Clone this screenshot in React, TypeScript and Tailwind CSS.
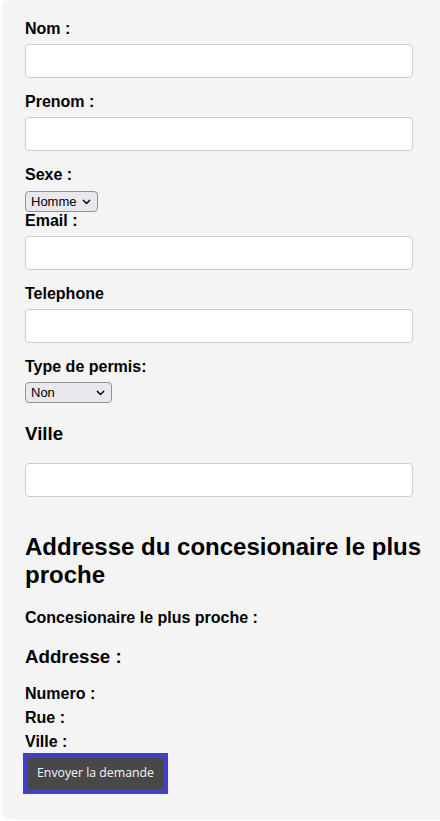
import { useState } from 'react'

function Chevron() {
  return (
    <svg
      className="w-[9px] h-[9px] absolute right-[7px] top-1/2 -translate-y-1/2 pointer-events-none"
      viewBox="0 0 10 10"
      fill="none"
    >
      <path d="M1.5 3.2L5 6.7l3.5-3.5" stroke="#111" strokeWidth="1.6" strokeLinecap="round" strokeLinejoin="round" />
    </svg>
  )
}

function Select({ value, options, width, onChange }: { value: string; options: string[]; width: string; onChange: (v: string) => void }) {
  return (
    <div className={`relative ${width}`}>
      <select
        value={value}
        onChange={(e) => onChange(e.target.value)}
        className="appearance-none block w-full h-[21px] pl-[5px] pr-5 text-[13px] leading-[19px] bg-[#e9e9ed] border border-[#8f8f9d] rounded-[4px] text-black"
        style={{ fontFamily: '"Liberation Sans", Arial, sans-serif' }}
      >
        {options.map(o => (
          <option key={o} value={o}>{o}</option>
        ))}
      </select>
      <Chevron />
    </div>
  )
}

// label + text input, as in the original form
function Field({ label, type = 'text' }: { label: string; type?: string }) {
  return (
    <div className="mb-[15px]">
      <label className="block font-bold text-[16px] leading-[18px] mb-[6px]">{label}</label>
      <input type={type} className="block w-[388px] h-[34px] bg-white border border-[#cccccc] rounded-[4px] px-2" />
    </div>
  )
}

export default function App() {
  const [sexe, setSexe] = useState('Homme')
  const [permis, setPermis] = useState('Non')

  return (
    <div className="pl-[3px] pb-[3px] bg-white text-black" style={{ fontFamily: '"Liberation Sans", Arial, sans-serif' }}>
      <div className="h-[818px] bg-[#f4f4f4] rounded-l-[8px] shadow-[0_0_3px_rgba(0,0,0,0.12)] pt-[20px] pl-[22px] pr-[12px]">
        <Field label="Nom :" />
        <Field label="Prenom :" />

        <label className="block font-bold text-[16px] leading-[18px] mb-[7px]">Sexe :</label>
        <Select value={sexe} options={['Homme', 'Femme']} width="w-[73px]" onChange={setSexe} />

        <Field label="Email :" type="email" />
        <Field label="Telephone" type="tel" />

        <label className="block font-bold text-[16px] leading-[18px] mb-[6px]">Type de permis:</label>
        <Select value={permis} options={['Non', 'A', 'B', 'C']} width="w-[87px]" onChange={setPermis} />

        <h3 className="font-bold text-[18.72px] leading-[21px] mt-[20px] mb-[19px]">Ville</h3>
        <input type="text" className="block w-[388px] h-[34px] bg-white border border-[#cccccc] rounded-[4px] px-2" />

        <h2 className="font-bold text-[24px] leading-[27.6px] mt-[36px] mb-[21px]">Addresse du concesionaire le plus proche</h2>

        <p className="font-bold text-[16px] leading-[18px]">Concesionaire le plus proche :</p>

        <h3 className="font-bold text-[18.72px] leading-[21px] mt-[19px] mb-[15px]">Addresse :</h3>

        <div className="font-bold text-[16px] leading-[24px]">
          <div>Numero :</div>
          <div>Rue :</div>
          <div>Ville :</div>
        </div>

        <button
          type="button"
          className="block mt-[4px] ml-[3px] h-[31px] w-[135px] bg-[#484848] text-[#f4f4f4] text-[12.3px] outline-[5px] outline-solid outline-[#4040c8]"
          style={{ fontFamily: '"Open Sans", "DejaVu Sans", sans-serif' }}
        >
          Envoyer la demande
        </button>
      </div>
    </div>
  )
}
